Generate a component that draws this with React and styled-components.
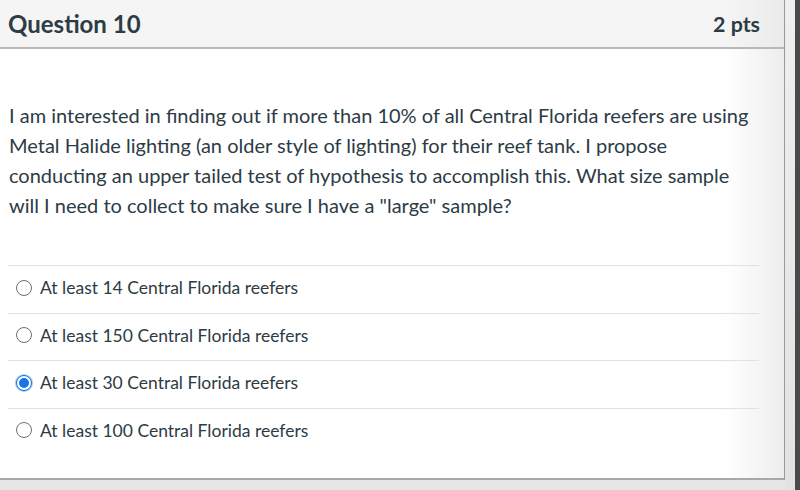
import React from "react";
import styled, { createGlobalStyle } from "styled-components";

const Global = createGlobalStyle`
  html, body { margin: 0; padding: 0; }
  body {
    width: 800px;
    height: 490px;
    overflow: hidden;
    background: #e6e6e6;
    font-family: Lato, "Open Sans", sans-serif;
    color: #2d3b45;
  }
`;

const Page = styled.div`
  display: flex;
  width: 800px;
  height: 490px;
`;

const Panel = styled.div`
  width: 785px;
  height: 480px;
  flex: none;
  display: flex;
  flex-direction: column;
  background: linear-gradient(to right, #ffffff 0, #ffffff 725px, #ededed 785px);
  border-right: 1px solid #9a9a9a;
  border-bottom: 2px solid #a8a8a8;
  box-sizing: border-box;
`;

const Gutter = styled.div`
  flex: 1;
  display: flex;
  background: linear-gradient(#efefef, #e2e2e2);
`;

const DarkStrip = styled.div`
  margin-left: auto;
  width: 5px;
  background: #4a4a4a;
`;

const Header = styled.div`
  height: 47px;
  display: flex;
  align-items: center;
  justify-content: space-between;
  padding: 0 24px 0 8px;
  background: linear-gradient(to right, #f5f5f5 0, #f5f5f5 725px, #eaeaea 784px);
  border-bottom: 2px solid #b8b8b8;
  flex: none;
`;

const Title = styled.h2`
  margin: 0;
  font-size: 24px;
  font-weight: 700;
  color: #2d3b45;
`;

const Points = styled.div`
  font-size: 21.4px;
  font-weight: 700;
  color: #2d3b45;
`;

const Body = styled.div`
  padding: 51px 25px 0 9px;
`;

const QuestionText = styled.p`
  margin: 0 0 45px;
  font-size: 20px;
  line-height: 30px;
  color: #2d3b45;
`;

const Answers = styled.div`
  margin-left: -1px;
  display: flex;
  flex-direction: column;
`;

const Answer = styled.label`
  display: flex;
  align-items: center;
  gap: 8px;
  height: 47.5px;
  box-sizing: border-box;
  padding: 0 0 3px 8px;
  border-top: 1.5px solid #e1e1e1;
  font-size: 17.5px;
  color: #2d3b45;
`;

const Radio = styled.span`
  width: 16px;
  height: 16px;
  box-sizing: border-box;
  border-radius: 50%;
  flex: none;
  border: 1.2px solid ${(p) => (p.$checked ? "#0b74de" : "#6f6f6f")};
  background: #fff;
  display: flex;
  align-items: center;
  justify-content: center;
  box-shadow: ${(p) => (p.$checked ? "0 0 0 1px rgba(11,116,222,0.35)" : "none")};
  &::after {
    content: "";
    display: ${(p) => (p.$checked ? "block" : "none")};
    width: 10px;
    height: 10px;
    border-radius: 50%;
    background: #1a73e8;
  }
`;

const answers = [
  { text: "At least 14 Central Florida reefers", checked: false },
  { text: "At least 150 Central Florida reefers", checked: false },
  { text: "At least 30 Central Florida reefers", checked: true },
  { text: "At least 100 Central Florida reefers", checked: false },
];

export default function App() {
  return (
    <>
      <Global />
      <Page>
        <Panel>
          <Header>
            <Title>Question 10</Title>
            <Points>2 pts</Points>
          </Header>
          <Body>
            <QuestionText>
              I am interested in finding out if more than 10% of all Central Florida reefers are using
              Metal Halide lighting (an older style of lighting) for their reef tank. I propose
              conducting an upper tailed test of hypothesis to accomplish this. What size sample
              will I need to collect to make sure I have a "large" sample?
            </QuestionText>
            <Answers>
              {answers.map((a) => (
                <Answer key={a.text}>
                  <Radio $checked={a.checked} />
                  {a.text}
                </Answer>
              ))}
            </Answers>
          </Body>
        </Panel>
        <Gutter>
          <DarkStrip />
        </Gutter>
      </Page>
    </>
  );
}
